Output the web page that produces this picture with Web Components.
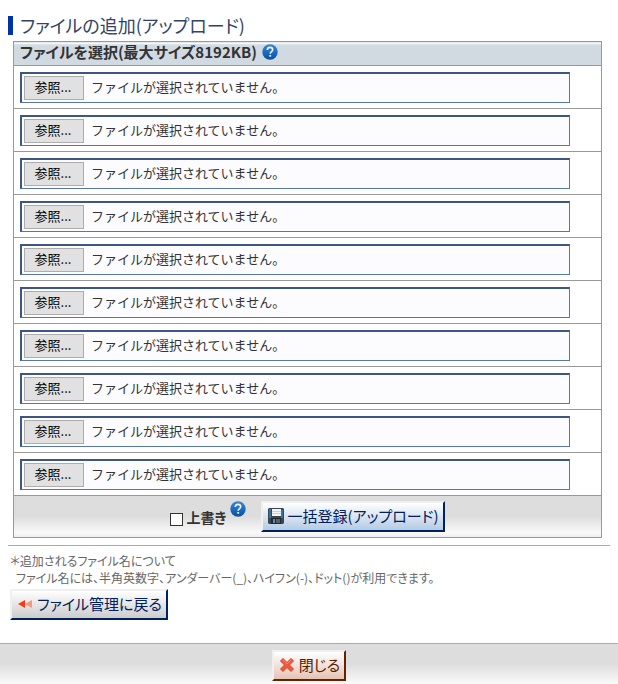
<!DOCTYPE html>
<html lang="ja">
<head>
<meta charset="UTF-8">
<meta name="viewport" content="width=device-width, initial-scale=1">
<title>ファイルの追加</title>
<style>
    body {
        margin: 0;
        background: #fff;
        color: #333;
        font-family: "Noto Sans CJK JP", sans-serif;
        font-size: 13px;
    }
</style>
</head>
<body>
<upload-page></upload-page>

<script>
class HelpIcon extends HTMLElement {
    constructor() {
        super();
        this.attachShadow({ mode: 'open' });
        this.shadowRoot.innerHTML = `
            <style>
                :host {
                    display: inline-flex;
                }

                svg {
                    display: block;
                    width: 16px;
                    height: 16px;
                }
            </style>
            <svg viewBox="0 0 16 16" role="img" aria-label="ヘルプ">
                <defs>
                    <linearGradient id="ball" x1="0" y1="0" x2="0" y2="1">
                        <stop offset="0" stop-color="#4585c6"/>
                        <stop offset="0.5" stop-color="#1b6dc2"/>
                        <stop offset="1" stop-color="#0b4f9d"/>
                    </linearGradient>
                </defs>
                <circle cx="8" cy="8" r="7.7" fill="url(#ball)"/>
                <path d="M5.3 6C5.400 4.200 6.500 3.400 8 3.400c1.600 0 2.700.9 2.700 2.300 0 1.800-2.500 1.900-2.500 4.100" fill="none" stroke="#e9f2fa" stroke-width="1.6"/>
                <rect x="7.300" y="11" width="1.800" height="1.700" fill="#e9f2fa"/>
            </svg>
        `;
    }
}

class IconButton extends HTMLElement {
    constructor() {
        super();
        this.attachShadow({ mode: 'open' });
        this.shadowRoot.innerHTML = `
            <style>
                :host {
                    --button-text: #002060;
                    --button-edge: #002060;
                    --button-light: #f0f0f0;
                    --button-from: #ffffff;
                    --button-to: #cccccc;
                    display: inline-flex;
                }

                :host([variant="save"]) {
                    --button-to: #b4cae4;
                }

                :host([variant="close"]) {
                    --button-text: #552200;
                    --button-edge: #662200;
                    --button-to: #e6c3b4;
                }

                button {
                    display: flex;
                    align-items: center;
                    gap: 4px;
                    height: 31px;
                    margin: 0;
                    padding: 0 4px 2px 5px;
                    border: 2px solid;
                    border-color: var(--button-light) var(--button-edge) var(--button-edge) var(--button-light);
                    background: linear-gradient(var(--button-from), var(--button-to));
                    color: var(--button-text);
                    font-family: inherit;
                    font-size: 15px;
                    line-height: 20px;
                    font-feature-settings: "palt";
                    white-space: nowrap;
                    cursor: pointer;
                }
            </style>
            <button type="button"><slot name="icon"></slot><slot></slot></button>
        `;
    }
}

class FileRow extends HTMLElement {
    constructor() {
        super();
        this.attachShadow({ mode: 'open' });
        this.shadowRoot.innerHTML = `
            <style>
                :host {
                    display: block;
                    padding: 6px 8px 5px 6px;
                    border-bottom: 1px solid #999;
                }

                .field {
                    display: flex;
                    align-items: center;
                    gap: 7px;
                    box-sizing: border-box;
                    width: 96%;
                    height: 31px;
                    padding: 0 2px;
                    border: 1px solid #5577aa;
                    border-top: 2px solid #3d5780;
                    border-left: 2px solid #3d5780;
                    background: #fcfcff;
                }

                input {
                    display: none;
                }

                button {
                    box-sizing: border-box;
                    width: 60px;
                    height: 24px;
                    padding: 0 2px 2px 0;
                    border: 1px solid #adadad;
                    background: #e1e1e1;
                    color: #000;
                    font-family: inherit;
                    font-size: 13px;
                    line-height: 20px;
                }

                label {
                    padding-bottom: 2px;
                    line-height: 20px;
                }
            </style>
            <div class="field">
                <input type="file" id="file">
                <button type="button">参照...</button>
                <label for="file">ファイルが選択されていません。</label>
            </div>
        `;
    }

    connectedCallback() {
        const input = this.shadowRoot.querySelector('input');
        const label = this.shadowRoot.querySelector('label');
        this.shadowRoot.querySelector('button').onclick = () => input.click();
        input.onchange = () => {
            label.textContent = input.files.length ? input.files[0].name : 'ファイルが選択されていません。';
        };
    }
}

class UploadPanel extends HTMLElement {
    constructor() {
        super();
        this.attachShadow({ mode: 'open' });
    }

    connectedCallback() {
        const count = Number(this.getAttribute('rows')) || 1;

        this.shadowRoot.innerHTML = `
            <style>
                :host {
                    display: block;
                    border: 1px solid #999;
                }

                .head {
                    display: flex;
                    align-items: center;
                    gap: 5px;
                    height: 20px;
                    padding: 0 6px 3px;
                    border-bottom: 1px solid #999;
                    background: linear-gradient(#e2e8ec 1px, #f4f8fa 1px, #f4f8fa 2px, #dfe6ea 2px, #d1d9e1 4px);
                }

                h2 {
                    margin: 0;
                    font-size: 15px;
                    line-height: 20px;
                    font-weight: 700;
                    font-feature-settings: "palt";
                }

                .foot {
                    display: flex;
                    justify-content: center;
                    align-items: center;
                    gap: 15px;
                    height: 41px;
                    background: linear-gradient(#ddd 50%, #fafafa 90%, #eee);
                }

                .overwrite {
                    display: flex;
                    align-items: center;
                    gap: 3px;
                }

                input {
                    appearance: none;
                    box-sizing: border-box;
                    width: 13px;
                    height: 13px;
                    margin: 6px 0 0;
                    border: 1px solid #333;
                    background: #fff;
                }

                input:checked {
                    background: #333;
                    box-shadow: inset 0 0 0 2px #fff;
                }

                label {
                    font-size: 14px;
                    line-height: 20px;
                    font-weight: 700;
                    font-feature-settings: "palt";
                }

                .overwrite help-icon {
                    align-self: flex-start;
                    padding-bottom: 16px;
                }
            </style>
            <div class="head"><h2><slot></slot></h2><help-icon></help-icon></div>
            ${'<file-row></file-row>'.repeat(count)}
            <div class="foot">
                <div class="overwrite">
                    <input type="checkbox" id="overwrite">
                    <label for="overwrite">上書き</label>
                    <help-icon></help-icon>
                </div>
                <icon-button variant="save">
                    <svg slot="icon" width="16" height="16" viewBox="0 0 16 16" aria-hidden="true">
                        <path d="M1 0h14l1 1v14l-1 1H1l-1-1V1z" fill="#3f454c"/>
                        <path d="M1 1h2v9H1zM13 2h2v8h-2z" fill="#2d75ad"/>
                        <path d="M4 1h9v7H4z" fill="#f4f4f4"/>
                        <path d="M4 3.500h9M4 5.500h9" stroke="#d0d0d0"/>
                        <path d="M3 10h10v6H3z" fill="#23282d"/>
                        <path d="M5 11h2v4H5z" fill="#4b91c6"/>
                        <path d="M8 11h4v4H8z" fill="#596068"/>
                    </svg>一括登録(アップロード)</icon-button>
            </div>
        `;
    }
}

class UploadPage extends HTMLElement {
    constructor() {
        super();
        this.attachShadow({ mode: 'open' });
        this.shadowRoot.innerHTML = `
            <style>
                :host {
                    display: block;
                }

                main {
                    padding: 16px 8px 23px;
                }

                h1 {
                    margin: 0 0 6px;
                    padding-left: 7px;
                    border-left: 5px solid #0033aa;
                    color: #334466;
                    font-size: 18px;
                    font-weight: 400;
                    line-height: 19px;
                    font-feature-settings: "palt";
                }

                upload-panel {
                    margin: 0 8px 0 5px;
                }

                hr {
                    margin: 7px 0 6px;
                    border: 0;
                    border-top: 1px solid #aaa;
                }

                p {
                    margin: 0 2px 3px;
                    color: #666;
                    font-size: 12px;
                    line-height: 17px;
                    font-feature-settings: "palt";
                }

                .indent {
                    padding-left: 6px;
                }

                .back {
                    margin-left: 2px;
                }

                footer {
                    display: flex;
                    justify-content: center;
                    padding: 6px 0 3px;
                    border-top: 1px solid #aaa;
                    background: linear-gradient(#ddd 50%, #fafafa);
                }
            </style>
            <main>
                <h1>ファイルの追加(アップロード)</h1>
                <upload-panel rows="10">ファイルを選択(最大サイズ8192KB)</upload-panel>
                <hr>
                <p>＊追加されるファイル名について<br><span class="indent">ファイル名には、半角英数字、アンダーバー(_)、ハイフン(-)、ドット()が利用できます。</span></p>
                <icon-button class="back">
                    <svg slot="icon" width="16" height="16" viewBox="0 0 16 16" aria-hidden="true">
                        <path d="M1 8l7-4v8z" fill="#ff3b0d"/>
                        <path d="M8 8l7-4v8z" fill="#f79682"/>
                    </svg>ファイル管理に戻る</icon-button>
            </main>
            <footer>
                <icon-button variant="close">
                    <svg slot="icon" width="16" height="16" viewBox="0 0 16 16" aria-hidden="true">
                        <path d="M4 1.500l4 4 4-4L14.500 4l-4 4 4 4L12 14.500l-4-4-4 4L1.500 12l4-4-4-4z" fill="#f0563c" stroke="#d8452f" stroke-linejoin="round"/>
                        <path d="M4 3l4 4 4-4" fill="none" stroke="#f58a70"/>
                    </svg>閉じる</icon-button>
            </footer>
        `;
    }
}

customElements.define('help-icon', HelpIcon);
customElements.define('icon-button', IconButton);
customElements.define('file-row', FileRow);
customElements.define('upload-panel', UploadPanel);
customElements.define('upload-page', UploadPage);
</script>
</body>
</html>
